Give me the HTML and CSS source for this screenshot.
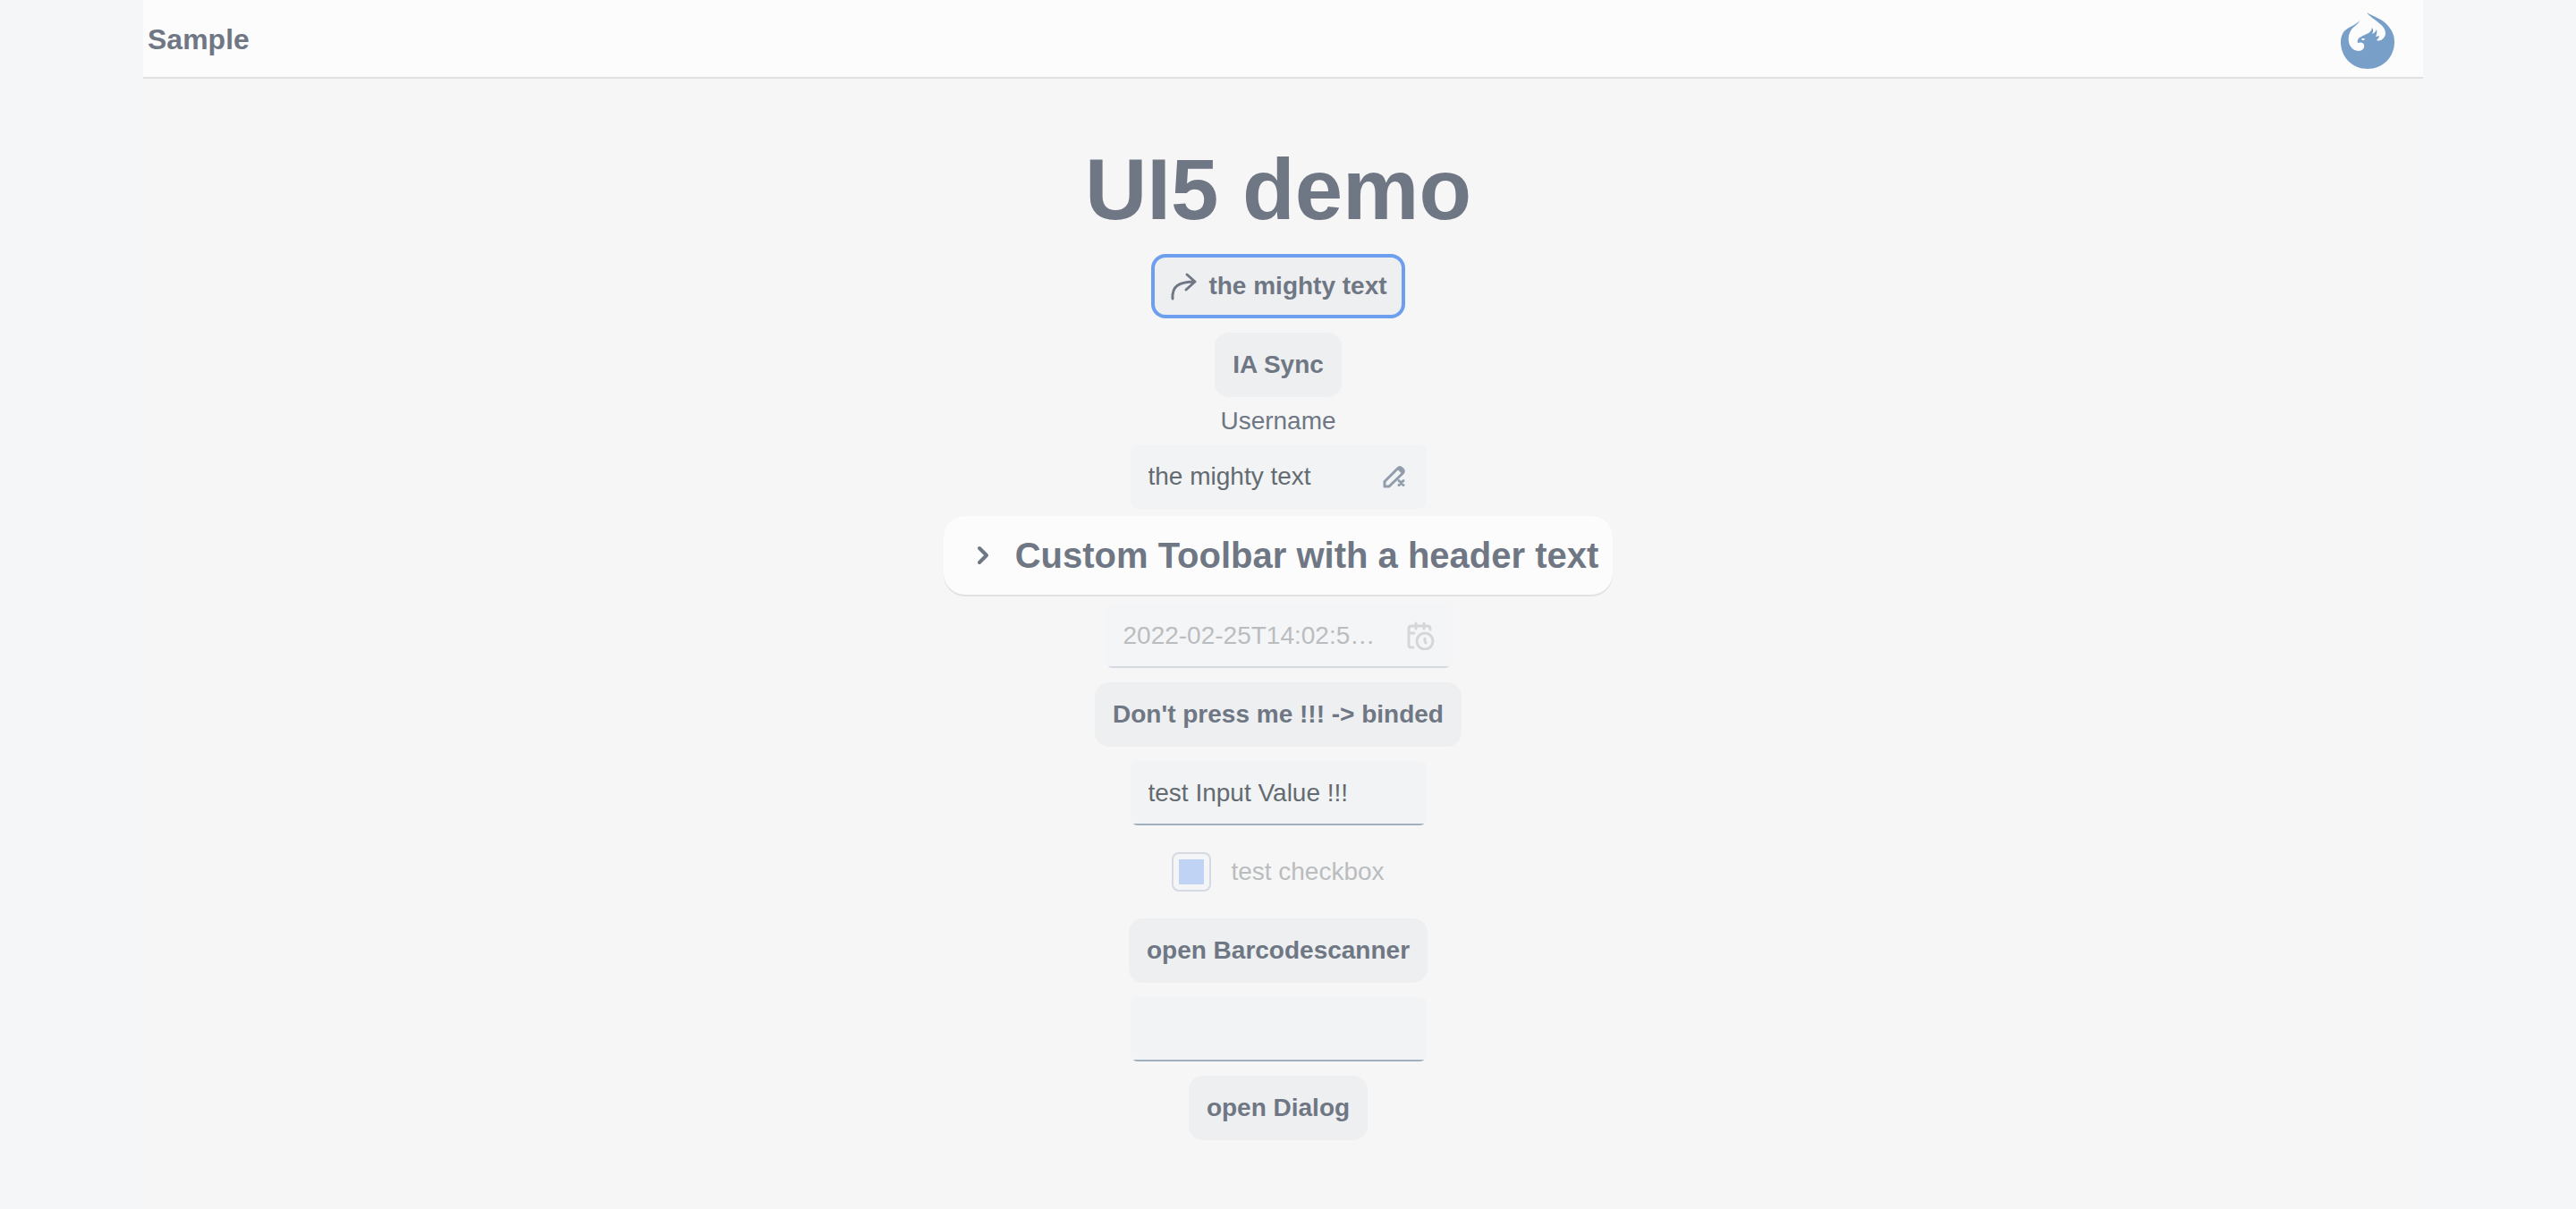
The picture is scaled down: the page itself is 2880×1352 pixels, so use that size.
FILE: index.html
```html
<!DOCTYPE html>
<html lang="en">
<head>
<meta charset="utf-8">
<title>Sample</title>
<link rel="stylesheet" href="styles.css">
</head>
<body>
<div class="shell">
  <header class="bar">
    <span class="bar-title">Sample</span>
    <svg class="logo" viewBox="0 0 60 63" aria-label="Phoenix logo" role="img">
      <path fill="#779fc8" d="M29 0 C37 5 47 7 53 15 C58 21 60 26 60 33 C60 50 47 63 30 63 C13 63 0 50 0 33 C0 27 2 22 6 19 C11 15 17 14 21 9 C20 13 15 15 12 19 C9 23 8 28 9 33 C10 39 15 43 20 43 C24 43 27 40 26 36 C25 33 22 33 19 34 C18 31 20 28 23 27 C27 24 34 24 35 17 C37 20 36 22 35 24 C38 23 39 21 40 19 C41 22 40 25 39 27 C41 27 42 26 43 26 C43 28 41 30 40 31 C44 33 50 29 50 23 C50 13 36 9 29 0 Z"/>
      <path fill="#fcfcfc" d="M23 29 L27 29 L26 31 L24 31 Z"/>
    </svg>
  </header>
  <main class="content">
    <h1 class="title">UI5 demo</h1>
    <button class="button button-focused" type="button">
      <svg class="button-icon" viewBox="0 0 32 32" aria-hidden="true"><path d="M4 30 C3 16 11 11 29 11 M20 3 L29 11 L19 20"/></svg>
      the mighty text
    </button>
    <button class="button" type="button">IA Sync</button>

    <div class="stack">
      <label class="label" for="username">Username</label>
      <div class="field field-readonly">
        <input class="field-input" id="username" type="text" value="the mighty text" readonly>
        <svg class="field-icon" viewBox="0 0 32 32" aria-hidden="true"><path d="M5 27 V21.500 L20 6.500 Q22 4.500 24 6.500 L25.500 8 Q27 10 25.500 12 L10 27 Z M20 6.500 L25.500 12"/><path d="M21 20.500 L26 25.500 M26 20.500 L21 25.500"/></svg>
      </div>
    </div>

    <div class="group">
      <section class="panel">
        <button class="panel-toggle" type="button" aria-label="Expand panel" aria-expanded="false">
          <svg class="panel-icon" viewBox="0 0 32 32" aria-hidden="true"><path d="M12 8 L20 16 L12 24"/></svg>
        </button>
        <h2 class="panel-title">Custom Toolbar with a header text</h2>
      </section>
      <div class="field field-date field-disabled">
        <input class="field-input" type="text" aria-label="Date and time" value="2022-02-25T14:02:5…" disabled>
        <svg class="field-icon" viewBox="0 0 32 32" aria-hidden="true"><path d="M7 29 H5 Q2 29 2 26 V8 Q2 5 5 5 H23 Q26 5 26 8 V9 M2 13 H8 M10 2 V8 M19 2 V8"/><circle cx="20" cy="22" r="9"/><path d="M20 19 V22 L21 24"/></svg>
      </div>
    </div>

    <button class="button" type="button">Don't press me !!! -&gt; binded</button>
    <div class="field">
      <input class="field-input" type="text" aria-label="Test input" value="test Input Value !!!">
    </div>
    <label class="check">
      <input class="check-box" type="checkbox" disabled>
      test checkbox
    </label>
    <button class="button" type="button">open Barcodescanner</button>
    <div class="field">
      <input class="field-input" type="text" aria-label="Barcode">
    </div>
    <button class="button" type="button">open Dialog</button>
  </main>
</div>
<script src="script.js"></script>
</body>
</html>
```
FILE: script.js
```js
document.querySelector('.check-box').indeterminate = true;
```
FILE: styles.css
```css
* { box-sizing: border-box; }

body {
  margin: 0;
  min-height: 100vh;
  background: #f4f6f8;
  color: #6f7784;
  font: 28px/32px "Liberation Sans", Arial, sans-serif;
}

.shell {
  min-height: 100vh;
  margin: 0 171px 0 160px;
  background: #f6f6f6;
}

.bar {
  display: flex;
  align-items: center;
  justify-content: space-between;
  height: 88px;
  padding: 2px 32px 0 5px;
  background: #fcfcfc;
  border-bottom: 2px solid #e1e1e1;
}

.bar-title { font-size: 32px; font-weight: 700; }

.logo { width: 60px; height: 63px; margin-top: 3px; }

.content {
  display: flex;
  flex-direction: column;
  align-items: center;
  gap: 16px;
  padding: 70px 11px 72px 0;
}

.title {
  margin: 0 0 2px;
  font-size: 96px;
  line-height: 108px;
}

.button {
  display: flex;
  align-items: center;
  gap: 12px;
  height: 72px;
  padding: 0 20px;
  border: 0;
  border-radius: 16px;
  background: #eeeff1;
  color: inherit;
  font: inherit;
  font-weight: 700;
}

.button-focused { box-shadow: inset 0 0 0 4px #6e9fee; }

.button-icon, .field-icon, .panel-icon {
  flex: none;
  width: 32px;
  height: 32px;
  fill: none;
  stroke: currentColor;
  stroke-width: 3;
  stroke-linecap: round;
  stroke-linejoin: round;
}

.stack {
  display: flex;
  flex-direction: column;
  align-items: center;
  gap: 16px;
}

.label { line-height: 21px; }

.group {
  display: flex;
  flex-direction: column;
  align-items: center;
  gap: 8px;
  margin-top: -8px;
}

.field {
  display: flex;
  align-items: center;
  width: 331px;
  height: 72px;
  padding: 0 20px;
  border-radius: 8px;
  background: linear-gradient(#a1afbe, #a1afbe) bottom / 100% 2px no-repeat #f1f3f5;
  color: #646b70;
}

.field-input {
  flex: 1;
  min-width: 0;
  padding: 0;
  border: 0;
  outline: 0;
  background: none;
  color: inherit;
  font: inherit;
}

.field-readonly { background: #f1f3f5; }
.field-readonly .field-icon { color: #929dac; }

.field-date { width: 387px; padding-right: 18px; }

.field-disabled {
  background: linear-gradient(#d5dae2, #d5dae2) bottom / 100% 2px no-repeat #f4f5f7;
  color: #babdbf;
}
.field-disabled .field-icon { color: #d5d6d8; }

.panel {
  display: flex;
  align-items: center;
  height: 90px;
  padding: 0 16px 3px 8px;
  border-radius: 24px;
  background: #fcfcfc;
  box-shadow: inset 0 -2px #e1e1e1;
}

.panel-toggle {
  display: flex;
  align-items: center;
  justify-content: center;
  width: 72px;
  height: 72px;
  padding: 0;
  border: 0;
  background: none;
  color: inherit;
}

.panel-icon { stroke-width: 4; }

.panel-title { margin: 0; font-size: 40px; line-height: 48px; }

.check {
  display: flex;
  align-items: center;
  gap: 22px;
  height: 72px;
  color: #babdbf;
}

.check-box {
  appearance: none;
  width: 44px;
  height: 44px;
  margin: 0;
  padding: 6px;
  border: 2px solid #d5dae2;
  border-radius: 8px;
  background: #f4f5f7;
}

.check-box:indeterminate {
  background: linear-gradient(#c0d3f4, #c0d3f4) content-box no-repeat, #f4f5f7;
}
```
